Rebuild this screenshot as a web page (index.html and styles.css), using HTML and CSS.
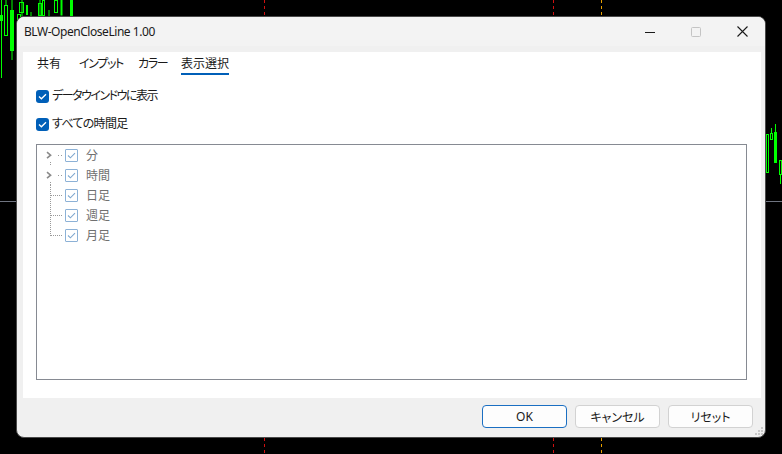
FILE: index.html
```html
<!DOCTYPE html>
<html lang="ja">
<head>
    <meta charset="UTF-8">
    <meta name="viewport" content="width=device-width, initial-scale=1.0">
    <title>BLW-OpenCloseLine 1.00</title>
    <link rel="stylesheet" href="styles.css">
</head>
<body>
    <div class="desktop">
        <!-- チャート（背景） -->
        <svg class="chart" width="782" height="454" viewBox="0 0 782 454">
            <line x1="0" y1="201.5" x2="782" y2="201.5" stroke="#6f7480" stroke-width="1"/>
            <line x1="264.5" y1="0" x2="264.5" y2="454" stroke="#d01010" stroke-dasharray="3 3"/>
            <line x1="553.5" y1="0" x2="553.5" y2="454" stroke="#d01010" stroke-dasharray="3 3"/>
            <line x1="601.5" y1="0" x2="601.5" y2="454" stroke="#e8a000" stroke-dasharray="3 3"/>
            <g stroke="#00ff00" fill="none" stroke-width="1">
                <line x1="1.5" y1="0" x2="1.5" y2="78"/>
                <rect x="0.5" y="15.5" width="2" height="5"/>
                <rect x="4.5" y="5.5" width="3" height="30"/>
                <line x1="6" y1="0" x2="6" y2="5"/>
                <rect x="10.5" y="10.5" width="3" height="40" fill="#00ff00"/>
                <line x1="12" y1="0" x2="12" y2="60"/>
                <rect x="17.5" y="14.5" width="3" height="10"/>
                <rect x="19.5" y="2.5" width="4" height="10"/>
                <line x1="22" y1="0" x2="22" y2="16"/>
                <rect x="26.5" y="5.5" width="1" height="9"/>
                <line x1="31" y1="12" x2="31" y2="16"/>
                <rect x="38.5" y="3.5" width="3" height="12"/>
                <line x1="40" y1="0" x2="40" y2="16"/>
                <rect x="42.5" y="0.5" width="2" height="15"/>
                <line x1="49" y1="10" x2="49" y2="16"/>
                <rect x="54.5" y="0.5" width="3" height="12"/>
                <rect x="61" y="0" width="1" height="15" fill="#00ff00"/>
                <rect x="70.5" y="-1" width="2" height="17" fill="#00ff00"/>
                <rect x="766.5" y="134.5" width="2" height="38"/>
                <rect x="770.5" y="133.5" width="2" height="6"/>
                <line x1="771.5" y1="128" x2="771.5" y2="133"/>
                <rect x="774.5" y="132.5" width="2" height="30" fill="#00ff00"/>
                <line x1="775.5" y1="124" x2="775.5" y2="132"/>
                <rect x="779.5" y="160.5" width="2" height="14"/>
                <line x1="780.5" y1="174" x2="780.5" y2="184"/>
            </g>
        </svg>

        <div class="window">
            <div class="titlebar">
                <span class="title">BLW-OpenCloseLine 1.00</span>
                <div class="controls">
                    <span class="ctl">
                        <svg width="10" height="10" viewBox="0 0 10 10"><line x1="0" y1="5.5" x2="10" y2="5.5" stroke="#1a1a1a"/></svg>
                    </span>
                    <span class="ctl">
                        <svg width="10" height="10" viewBox="0 0 10 10"><rect x="0.5" y="0.5" width="9" height="9" rx="1" fill="none" stroke="#c4c4c4"/></svg>
                    </span>
                    <span class="ctl">
                        <svg width="11" height="11" viewBox="0 0 11 11"><path d="M0.5 0.5L10.5 10.5M10.5 0.5L0.5 10.5" stroke="#1a1a1a" stroke-width="1.1"/></svg>
                    </span>
                </div>
            </div>

            <div class="client">
                <div class="panel">
                    <div class="tabs">
                        <span class="tab">共有</span>
                        <span class="tab">インプット</span>
                        <span class="tab">カラー</span>
                        <span class="tab active">表示選択</span>
                    </div>

                    <label class="check">
                        <span class="box"><svg width="9" height="7" viewBox="0 0 9 7"><path d="M1 3.5L3.4 5.8L8 1.2" fill="none" stroke="#fff" stroke-width="1.3"/></svg></span>
                        <span class="text tight">データウインドウに表示</span>
                    </label>
                    <label class="check">
                        <span class="box"><svg width="9" height="7" viewBox="0 0 9 7"><path d="M1 3.5L3.4 5.8L8 1.2" fill="none" stroke="#fff" stroke-width="1.3"/></svg></span>
                        <span class="text">すべての時間足</span>
                    </label>

                    <div class="tree">
                        <div class="node">
                            <svg class="lines" width="28" height="20" viewBox="0 0 28 20">
                                <path d="M10 7.2L13.6 10.2L10 13.2" fill="none" stroke="#8a8a8a" stroke-width="1.6"/>
                                <line x1="21" y1="10.5" x2="26" y2="10.5" stroke="#999" stroke-dasharray="1 2"/>
                                <line x1="13.5" y1="17" x2="13.5" y2="20" stroke="#999" stroke-dasharray="1 1"/>
                            </svg>
                            <span class="tbox"><svg width="9" height="7" viewBox="0 0 9 7"><path d="M1 3.5L3.4 5.8L8 1.2" fill="none" stroke="#7fa8d0" stroke-width="1.1"/></svg></span>
                            <span class="label">分</span>
                        </div>
                        <div class="node">
                            <svg class="lines" width="28" height="20" viewBox="0 0 28 20">
                                <path d="M10 7.2L13.6 10.2L10 13.2" fill="none" stroke="#8a8a8a" stroke-width="1.6"/>
                                <line x1="21" y1="10.5" x2="26" y2="10.5" stroke="#999" stroke-dasharray="1 2"/>
                                <line x1="13.5" y1="17" x2="13.5" y2="20" stroke="#999" stroke-dasharray="1 1"/>
                            </svg>
                            <span class="tbox"><svg width="9" height="7" viewBox="0 0 9 7"><path d="M1 3.5L3.4 5.8L8 1.2" fill="none" stroke="#7fa8d0" stroke-width="1.1"/></svg></span>
                            <span class="label">時間</span>
                        </div>
                        <div class="node">
                            <svg class="lines" width="28" height="20" viewBox="0 0 28 20">
                                <line x1="13.5" y1="0" x2="13.5" y2="20" stroke="#999" stroke-dasharray="1 1"/>
                                <line x1="14" y1="10.5" x2="26" y2="10.5" stroke="#999" stroke-dasharray="1 1"/>
                            </svg>
                            <span class="tbox"><svg width="9" height="7" viewBox="0 0 9 7"><path d="M1 3.5L3.4 5.8L8 1.2" fill="none" stroke="#7fa8d0" stroke-width="1.1"/></svg></span>
                            <span class="label">日足</span>
                        </div>
                        <div class="node">
                            <svg class="lines" width="28" height="20" viewBox="0 0 28 20">
                                <line x1="13.5" y1="0" x2="13.5" y2="20" stroke="#999" stroke-dasharray="1 1"/>
                                <line x1="14" y1="10.5" x2="26" y2="10.5" stroke="#999" stroke-dasharray="1 1"/>
                            </svg>
                            <span class="tbox"><svg width="9" height="7" viewBox="0 0 9 7"><path d="M1 3.5L3.4 5.8L8 1.2" fill="none" stroke="#7fa8d0" stroke-width="1.1"/></svg></span>
                            <span class="label">週足</span>
                        </div>
                        <div class="node">
                            <svg class="lines" width="28" height="20" viewBox="0 0 28 20">
                                <line x1="13.5" y1="0" x2="13.5" y2="11" stroke="#999" stroke-dasharray="1 1"/>
                                <line x1="14" y1="10.5" x2="26" y2="10.5" stroke="#999" stroke-dasharray="1 1"/>
                            </svg>
                            <span class="tbox"><svg width="9" height="7" viewBox="0 0 9 7"><path d="M1 3.5L3.4 5.8L8 1.2" fill="none" stroke="#7fa8d0" stroke-width="1.1"/></svg></span>
                            <span class="label">月足</span>
                        </div>
                    </div>
                </div>
            </div>

            <div class="footer">
                <button class="btn primary">OK</button>
                <button class="btn">キャンセル</button>
                <button class="btn">リセット</button>
                <svg class="grip" width="10" height="10" viewBox="0 0 10 10">
                    <g fill="#c8c8c8">
                        <rect x="7" y="1" width="2" height="2"/>
                        <rect x="4" y="4" width="2" height="2"/>
                        <rect x="7" y="4" width="2" height="2"/>
                        <rect x="1" y="7" width="2" height="2"/>
                        <rect x="4" y="7" width="2" height="2"/>
                        <rect x="7" y="7" width="2" height="2"/>
                    </g>
                </svg>
            </div>
        </div>
    </div>
</body>
</html>
```

FILE: styles.css
```css
body {
    margin: 0;
    background-color: #000;
    font-family: "Noto Sans", "Noto Sans CJK JP", sans-serif;
    font-size: 12px;
    color: #1a1a1a;
    overflow: hidden;
}
.desktop {
    position: relative;
    width: 782px;
    height: 454px;
    overflow: hidden;
}
.chart {
    position: absolute;
    left: 0;
    top: 0;
}
.window {
    position: absolute;
    left: 16px;
    top: 16px;
    width: 750px;
    height: 422px;
    box-sizing: border-box;
    border: 1px solid #4a4a4a;
    border-radius: 8px;
    background-color: #f0f0f0;
    display: flex;
    flex-direction: column;
    overflow: hidden;
}
.titlebar {
    height: 29px;
    display: flex;
    align-items: center;
    justify-content: space-between;
    background-color: #f3f3f3;
}
.title {
    padding-left: 7px;
    font-size: 12px;
    letter-spacing: -0.45px;
    color: #1a1a1a;
}
.controls {
    display: flex;
    height: 100%;
}
.ctl {
    width: 46px;
    display: flex;
    align-items: center;
    justify-content: center;
}
.client {
    flex: 1;
    display: flex;
    padding: 6px 4px 0 6px;
}
.panel {
    flex: 1;
    background-color: #fff;
    display: flex;
    flex-direction: column;
}
.tabs {
    display: grid;
    grid-template-columns: 42px 59px 43px max-content;
    padding: 4px 0 0 14px;
    font-feature-settings: "palt";
}
.tab {
    justify-self: start;
    line-height: 16px;
    padding-bottom: 1px;
    border-bottom: 2px solid transparent;
    white-space: nowrap;
}
.tab:nth-child(2),
.tab:nth-child(3) {
    letter-spacing: -1.3px;
}
.tab.active {
    border-bottom-color: #005fb8;
}
.check {
    display: flex;
    align-items: center;
    gap: 3px;
    margin-left: 13px;
    line-height: 16px;
    font-feature-settings: "palt";
}
.check:first-of-type {
    margin-top: 13px;
}
.check + .check {
    margin-top: 12px;
}
.text {
    letter-spacing: -0.7px;
}
.text.tight {
    letter-spacing: -1.5px;
}
.box {
    width: 13px;
    height: 13px;
    border-radius: 3px;
    background-color: #005fb8;
    display: flex;
    align-items: center;
    justify-content: center;
}
.tree {
    flex: 1;
    margin: 12px 14px 18px 13px;
    border: 1px solid #868a92;
}
.node {
    height: 20px;
    display: flex;
    align-items: center;
}
.tbox {
    width: 11px;
    height: 11px;
    border: 1px solid #8cb1d6;
    border-radius: 1px;
    display: flex;
    align-items: center;
    justify-content: center;
}
.label {
    margin-left: 8px;
    color: #707070;
}
.footer {
    position: relative;
    height: 39px;
    display: flex;
    justify-content: flex-end;
    align-items: flex-start;
    gap: 8px;
    padding: 7px 12px 0 0;
    box-sizing: border-box;
}
.btn {
    width: 85px;
    height: 23px;
    font-family: "Noto Sans", "Noto Sans CJK JP", sans-serif;
    font-size: 12px;
    color: #1a1a1a;
    background-color: #fdfdfd;
    border: 1px solid #d2d2d2;
    border-radius: 4px;
    padding: 0;
    font-feature-settings: "palt";
}
.btn.primary {
    border-color: #1b6fc2;
}
.grip {
    position: absolute;
    right: 1px;
    bottom: 1px;
}
```
